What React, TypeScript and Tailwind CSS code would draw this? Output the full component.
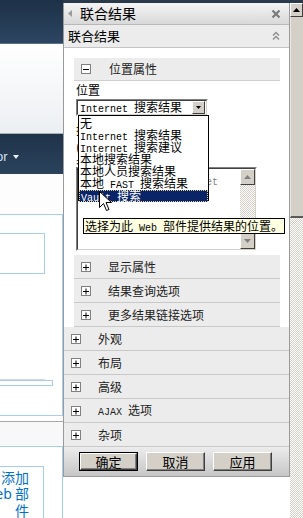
import React from "react";

const checker =
  "bg-[repeating-conic-gradient(#d4d0c8_0_25%,#ffffff_0_50%)] bg-[length:2px_2px]";

// SimSun-like mix: half-width latin, full-width CJK
function Mix({ t }: { t: string }) {
  const parts = t.split(/([\x00-\x7f]+)/).filter(Boolean);
  return (
    <>
      {parts.map((p, i) =>
        /^[\x00-\x7f]+$/.test(p) ? (
          <span key={i} className="font-['Liberation_Mono',monospace] text-[10px] whitespace-pre">
            {p}
          </span>
        ) : (
          <span key={i}>{p}</span>
        )
      )}
    </>
  );
}

function Box({ minus }: { minus?: boolean }) {
  return (
    <svg width="10" height="10" viewBox="0 0 10 10" className="shrink-0">
      <rect x="0.5" y="0.5" width="9" height="9" fill="#fff" stroke="#808080" />
      <path d="M2 5.5h6" stroke="#000" />
      {!minus && <path d="M5 2.5v6" stroke="#000" />}
    </svg>
  );
}

function Win98Btn({ label, def }: { label: string; def?: boolean }) {
  return (
    <div
      className={`w-[59px] h-[19px] ${def ? "border border-black" : ""} bg-[#d4d0c8]`}
    >
      <div className="h-full flex items-center justify-center border-t border-l border-white border-r border-b border-r-[#404040] border-b-[#404040] shadow-[inset_-1px_-1px_0_#808080] text-[13px] text-black leading-none">
        {label}
      </div>
    </div>
  );
}

function LeftPage() {
  return (
    <div className="w-[63px] shrink-0 flex flex-col overflow-hidden bg-white">
      <div className="h-[44px] bg-gradient-to-b from-[#1d3148] to-[#2d4661]" />
      <div className="h-px bg-[#5a7088]" />
      <div className="h-[90px] bg-gradient-to-b from-white to-[#eceff2]" />
      <div className="h-px bg-[#a8b0b8]" />
      <div className="h-[40px] bg-gradient-to-b from-[#1f3349] to-[#2b435d] flex items-center pt-[6px]">
        <span className="text-[13px] text-[#cfe0f2] font-['Liberation_Sans',sans-serif] -ml-[4px]">or</span>
        <svg width="6" height="4" viewBox="0 0 6 4" className="ml-[5px]">
          <path d="M0 0h6L3 4z" fill="#e8eef4" />
        </svg>
      </div>
      <div className="h-[41px] bg-[#fdfdfd]" />
      <div className="h-[205px] -ml-2 border border-[#a6cdf0] bg-white flex flex-col">
        <div className="h-[18px]" />
        <div className="h-[41px] w-[52px] border border-[#a6cdf0]" />
        <div className="h-[105px]" />
        <div className="h-px w-[52px] bg-[#d8d8d8]" />
        <div className="h-[6px] w-[60px] border border-[#a6cdf0]" />
      </div>
      <div className="h-[5px] bg-white" />
      <div className="h-px bg-[#a8a8a8]" />
      <div className="h-[24px] bg-[#f8f8f8]" />
      <div className="flex-1 -ml-2 border-t border-r border-[#a6cdf0] bg-white pt-[19px]">
        <div className="h-full w-[52px] border-t border-r border-[#a6cdf0] text-right pr-[14px] pt-[2px] text-[14px] leading-[16px] text-[#0072c6]">
          <div>添加</div>
          <div>
            <span className="font-['Noto_Sans',sans-serif]">eb</span> 部
          </div>
          <div>件</div>
        </div>
      </div>
    </div>
  );
}

function SubRow({ label }: { label: string }) {
  return (
    <div className="h-[24px] flex items-center bg-[#ececec] border-b border-[#c8c8c8] pl-[7px]">
      <Box />
      <span className="ml-[17px] text-[12px] text-[#222]">{label}</span>
    </div>
  );
}

function OuterRow({ label }: { label: string }) {
  return (
    <div className="h-[24px] flex items-center bg-[#ececec] border-b border-[#c8c8c8] pl-[7px]">
      <Box />
      <span className="ml-[17px] text-[12px] text-[#222]">
        <Mix t={label} />
      </span>
    </div>
  );
}

function Panel() {
  const items = ["无", "Internet 搜索结果", "Internet 搜索建议", "本地搜索结果", "本地人员搜索结果", "本地 FAST 搜索结果"];
  return (
    <div className="w-[227px] shrink-0 flex flex-col">
      <div className="h-[3px] bg-[#2b3a4b]" />
      <div className="border-l border-r border-b border-[#9a9a9a] flex flex-col">
        {/* title bar */}
        <div className="h-[22px] flex items-center bg-gradient-to-b from-[#f4f4f4] to-[#d9d9d9] border-b border-[#b8b8b8] pl-[4px] pr-[8px]">
          <svg width="4" height="7" viewBox="0 0 4 7">
            <path d="M4 0v7L0 3.5z" fill="#9a9a9a" />
          </svg>
          <span className="ml-[8px] text-[14px] text-black">联合结果</span>
          <svg width="10" height="10" viewBox="0 0 10 10" className="ml-auto">
            <path d="M1.5 1.5l7 7M8.5 1.5l-7 7" stroke="#7a7a7a" strokeWidth="2.2" />
          </svg>
        </div>
        {/* web part name row */}
        <div className="h-[23px] flex items-center bg-[#ececec] border-b border-[#c4c4c4] pl-[4px] pr-[9px]">
          <span className="text-[13px] text-black">联合结果</span>
          <svg width="8" height="10" viewBox="0 0 8 10" className="ml-auto">
            <path d="M1 4.5L4 1.5L7 4.5M1 8.5L4 5.5L7 8.5" stroke="#8a8a8a" strokeWidth="1.3" fill="none" />
          </svg>
        </div>
        {/* content */}
        <div className="relative bg-white pt-[10px] flex flex-col">
          <div className="mx-[10px] mr-[9px]">
            <div className="h-[23px] flex items-center bg-[#ececec] border-b border-[#d0d0d0] pl-[7px]">
              <Box minus />
              <span className="ml-[18px] text-[12px] text-[#222]">位置属性</span>
            </div>
            <div className="pl-[2px] pt-[1px] h-[18px] text-[12px] leading-[16px] text-black">位置</div>
            {/* select */}
            <div className="ml-[2px] w-[132px] h-[17px] border border-t-[#808080] border-l-[#808080] border-b-white border-r-white">
              <div className="h-full flex items-center border border-t-[#404040] border-l-[#404040] border-b-[#d4d0c8] border-r-[#d4d0c8] bg-white pl-[2px] pr-px">
                <span className="text-[12px] leading-none text-black whitespace-nowrap">
                  <Mix t="Internet 搜索结果" />
                </span>
                <div className="ml-auto w-[13px] h-[13px] bg-[#d4d0c8] border border-t-white border-l-white border-b-[#404040] border-r-[#404040] flex items-center justify-center">
                  <svg width="5" height="3" viewBox="0 0 5 3">
                    <path d="M0 0h5L2.5 3z" fill="#000" />
                  </svg>
                </div>
              </div>
            </div>
            {/* labels behind dropdown */}
            <div className="h-[51px] pl-[2px] text-[12px] leading-[17px] text-black pt-[5px]">
              <div>搜索查询</div>
              <div>(结果)</div>
              <div>查询</div>
            </div>
            {/* textarea */}
            <div className="ml-[2px] w-[181px] h-[84px] border border-t-[#808080] border-l-[#808080] border-b-white border-r-white">
              <div className="h-full flex border border-t-[#404040] border-l-[#404040] border-b-[#d4d0c8] border-r-[#d4d0c8] bg-white">
                <div className="flex-1 pl-[2px] pt-[2px] text-[12px] text-[#7d8592] whitespace-nowrap overflow-hidden">
                  <Mix t="{searchTerms}  Internet" />
                </div>
                <div className="w-[15px] flex flex-col">
                  <div className="h-[16px] bg-[#d4d0c8] border border-t-white border-l-white border-b-[#404040] border-r-[#404040] flex items-center justify-center">
                    <svg width="7" height="4" viewBox="0 0 7 4">
                      <path d="M0 4h7L3.5 0z" fill="#808080" />
                    </svg>
                  </div>
                  <div className={`flex-1 ${checker}`} />
                  <div className="h-[16px] bg-[#d4d0c8] border border-t-white border-l-white border-b-[#404040] border-r-[#404040] flex items-center justify-center">
                    <svg width="7" height="4" viewBox="0 0 7 4">
                      <path d="M0 0h7L3.5 4z" fill="#808080" />
                    </svg>
                  </div>
                </div>
              </div>
            </div>
            <div className="h-[4px]" />
            <SubRow label="显示属性" />
            <SubRow label="结果查询选项" />
            <SubRow label="更多结果链接选项" />
          </div>

          {/* open dropdown list */}
          <div className="absolute left-[14px] top-[67px] w-[131px] h-[86px] bg-white border border-black text-[12px] leading-[12px] text-black pt-[1px]">
            {items.map((it) => (
              <div key={it} className="h-[12px] pl-px whitespace-nowrap">
                <Mix t={it} />
              </div>
            ))}
            <div className="h-[12px] mt-px bg-[#0a246a] text-white pl-px border border-dotted border-[#e8d080] leading-[10px] whitespace-nowrap">
              <Mix t="Vault 搜索" />
            </div>
          </div>

          {/* tooltip */}
          <div className="absolute left-[19px] top-[170px] w-[202px] h-[16px] bg-[#ffffe1] border border-black text-[12px] leading-[14px] text-black pl-px whitespace-nowrap">
            <Mix t="选择为此 Web 部件提供结果的位置。" />
          </div>

          {/* mouse cursor */}
          <svg width="13" height="21" viewBox="0 0 13 21" className="absolute left-[35px] top-[143px]">
            <path
              d="M0.5 0.5v16l4-4 3 7 2.5-1-3-7h5.5z"
              fill="#fff"
              stroke="#000"
              strokeWidth="1"
              strokeLinejoin="miter"
            />
          </svg>
        </div>
        {/* outer sections */}
        <OuterRow label="外观" />
        <OuterRow label="布局" />
        <OuterRow label="高级" />
        <OuterRow label="AJAX 选项" />
        <OuterRow label="杂项" />
        {/* footer */}
        <div className="h-[29px] bg-gradient-to-b from-[#ececec] to-[#c6c6c6] flex items-start pt-[5px] pl-[15px] gap-[8px]">
          <Win98Btn label="确定" def />
          <Win98Btn label="取消" />
          <Win98Btn label="应用" />
        </div>
      </div>
      <div className="flex-1 bg-white" />
    </div>
  );
}

function Scrollbar() {
  return (
    <div className="w-[13px] shrink-0 flex flex-col">
      <div className="h-[3px] bg-[#2b3a4b]" />
      <div className="h-[14px] bg-[#d4d0c8] border border-t-white border-l-white border-b-[#404040] border-r-[#404040] flex items-center justify-center">
        <svg width="7" height="4" viewBox="0 0 7 4">
          <path d="M0 4h7L3.5 0z" fill="#000" />
        </svg>
      </div>
      <div className="h-[201px] bg-[#d4d0c8] border-l border-l-[#ece9e2] border-b-2 border-b-[#5a5a5a]" />
      <div className={`flex-1 ${checker}`} />
    </div>
  );
}

export default function App() {
  return (
    <div className="w-[303px] h-[518px] overflow-hidden flex bg-white font-['Noto_Sans_CJK_SC','Noto_Sans',sans-serif]">
      <LeftPage />
      <Panel />
      <Scrollbar />
    </div>
  );
}
